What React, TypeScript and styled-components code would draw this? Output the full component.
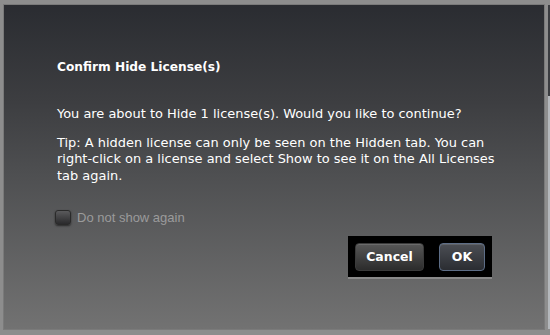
import React from "react";
import styled, { createGlobalStyle } from "styled-components";

const Global = createGlobalStyle`
  html, body { margin: 0; padding: 0; background: #8d8d8d; }
  body { width: 550px; height: 335px; overflow: hidden; }
`;

const Frame = styled.div`
  display: flex;
  width: 550px;
  height: 335px;
  box-sizing: border-box;
  padding: 5px 0 6px 4px;
  gap: 4px;
`;

const Panel = styled.div`
  width: 540px;
  height: 324px;
  box-sizing: border-box;
  background: linear-gradient(#2a2c31 0%, #3d3e41 30%, #4e4f51 52%, #727272 100%);
  box-shadow: 0 0 0 1px #7a7a7a;
  padding: 54px 52px 0 53px;
  display: flex;
  flex-direction: column;
  font-family: "DejaVu Sans", "Liberation Sans", sans-serif;
  color: #ffffff;
`;

const SideStrip = styled.div`
  flex: 1;
  background: linear-gradient(#3a3c40 0 28%, #b4b8bc 28% 100%);
`;

const Title = styled.div`
  font-size: 12.2px;
  font-weight: bold;
  line-height: 17px;
`;

const Message = styled.p<{ $top: number }>`
  margin: ${(p) => p.$top}px 0 0;
  font-size: 12.95px;
  line-height: 16.5px;
  width: 446px;
`;

const CheckRow = styled.label`
  display: flex;
  align-items: center;
  gap: 6px;
  margin-top: 26px;
  margin-left: -2px;
  font-family: "Liberation Sans", Arial, sans-serif;
  font-size: 13px;
  color: #9b9b9b;
`;

const Box = styled.span`
  width: 16px;
  height: 15px;
  border-radius: 3px;
  box-sizing: border-box;
  background: linear-gradient(#5a5a5c, #2a2a2c);
  border: 1px solid #2a2a2a;
  box-shadow: 0 1px 2px rgba(0, 0, 0, 0.55);
`;

const ButtonBar = styled.div`
  align-self: flex-end;
  margin-top: 11px;
  display: flex;
  gap: 15px;
  padding: 7px 7px 6px 7px;
  background: #000;
  box-shadow: 0 2px 0 #8a8a8a;
`;

const Button = styled.button<{ $w: number; $default?: boolean }>`
  width: ${(p) => p.$w}px;
  height: 28px;
  border-radius: 4px;
  box-sizing: border-box;
  border: 1px solid ${(p) => (p.$default ? "#5d6d86" : "#3a3a3a")};
  background: ${(p) =>
    p.$default
      ? "linear-gradient(#4b4e54, #2b2d32)"
      : "linear-gradient(#575757, #2c2c2c)"};
  box-shadow: inset 0 1px 0 rgba(255, 255, 255, 0.12);
  color: #fff;
  font-family: "DejaVu Sans", "Liberation Sans", sans-serif;
  font-weight: bold;
  font-size: 12.5px;
  padding: 0 0 2px;
  cursor: pointer;
`;

export default function App() {
  return (
    <>
      <Global />
      <Frame>
        <Panel>
          <Title>Confirm Hide License(s)</Title>
          <Message $top={30}>
            You are about to Hide 1 license(s). Would you like to continue?
          </Message>
          <Message $top={12}>
            Tip: A hidden license can only be seen on the Hidden tab. You can
            right-click on a license and select Show to see it on the All Licenses
            tab again.
          </Message>
          <CheckRow>
            <Box />
            Do not show again
          </CheckRow>
          <ButtonBar>
            <Button $w={69}>Cancel</Button>
            <Button $w={46} $default>
              OK
            </Button>
          </ButtonBar>
        </Panel>
        <SideStrip />
      </Frame>
    </>
  );
}
